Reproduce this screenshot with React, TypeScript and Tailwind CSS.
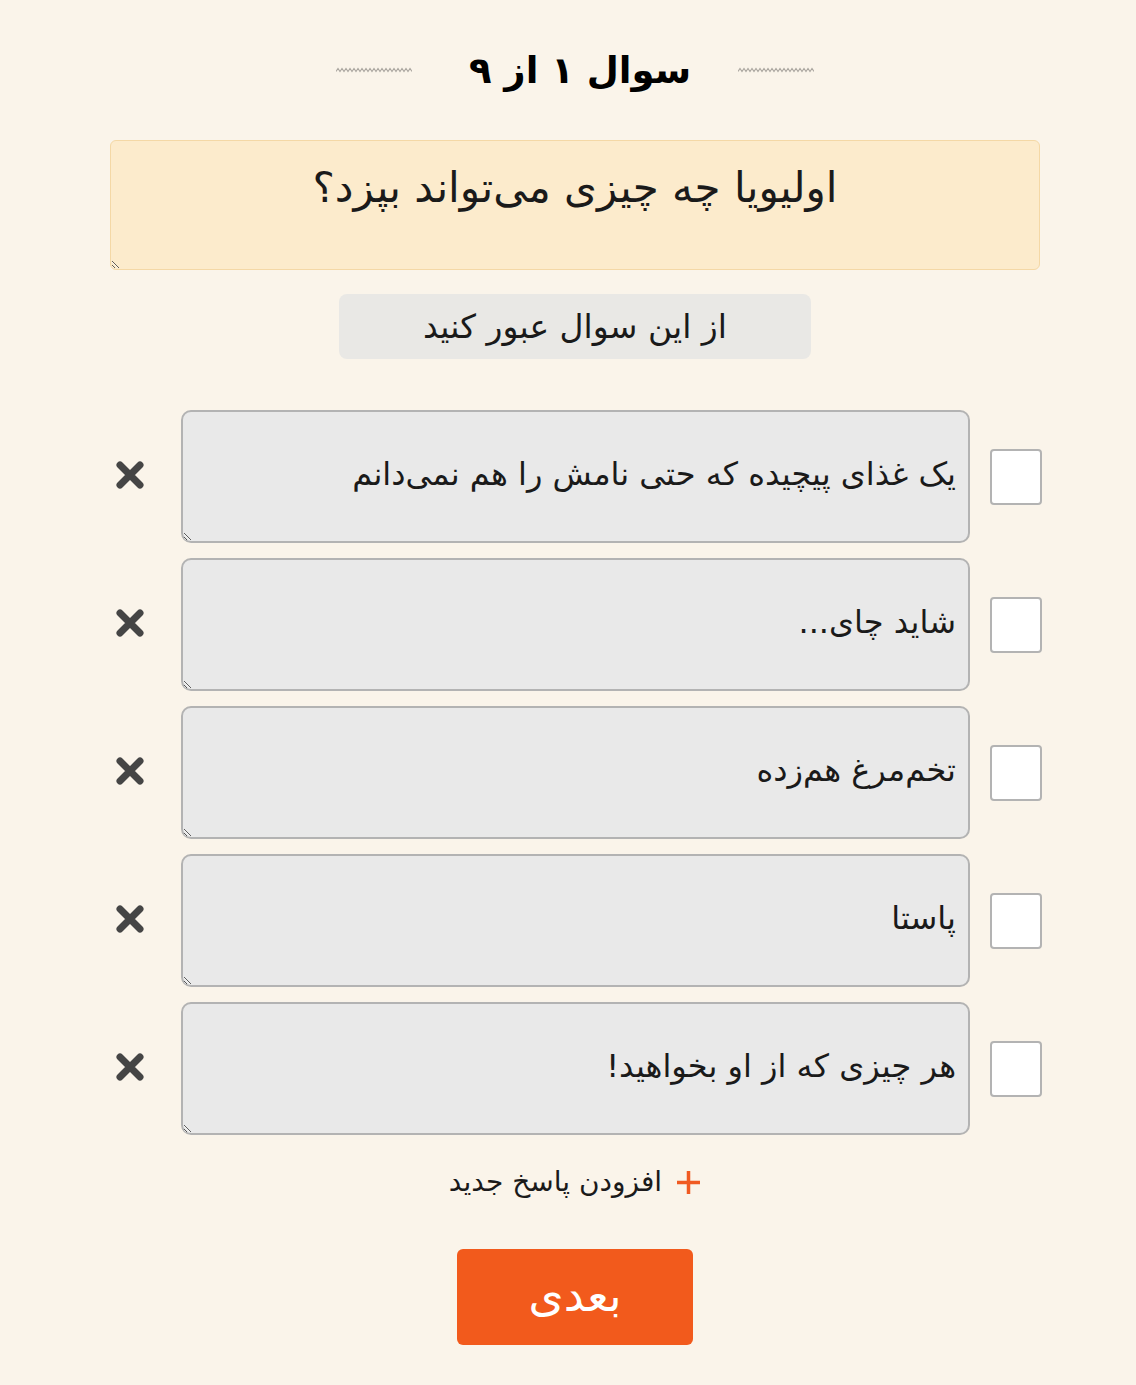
import React, { useState } from 'react';

const answersInit = [
    'یک غذای پیچیده که حتی نامش را هم نمی‌دانم',
    'شاید چای...',
    'تخم‌مرغ هم‌زده',
    'پاستا',
    'هر چیزی که از او بخواهید!',
];

const Squiggle: React.FC = () => (
    <svg width="76" height="6" viewBox="0 0 76 6" className="block">
        <polyline
            points={Array.from({ length: 39 }, (_, i) => `${i * 2},${i % 2 === 0 ? 4.5 : 1.5}`).join(' ')}
            fill="none"
            stroke="#a9a59e"
            strokeWidth="1.1"
        />
    </svg>
);

const CrossIcon: React.FC = () => (
    <svg width="30" height="30" viewBox="0 0 30 30">
        <path d="M5 5 L25 25 M25 5 L5 25" stroke="#454545" strokeWidth="7" strokeLinecap="round" />
    </svg>
);

const App: React.FC = () => {
    const [answers, setAnswers] = useState(answersInit);
    const [checked, setChecked] = useState<boolean[]>(answersInit.map(() => false));

    const removeAnswer = (idx: number) => {
        setAnswers(answers.filter((_, i) => i !== idx));
        setChecked(checked.filter((_, i) => i !== idx));
    };

    return (
        <div className="min-h-[1385px] bg-[#faf4ea] font-['DejaVu_Sans',sans-serif] text-[#1a1a1a]">
            <div className="ml-[110px] w-[932px] pt-[38px]">
                {/* title */}
                <div className="flex items-center justify-center h-[64px] pr-[2px]">
                    <Squiggle />
                    <h1 dir="rtl" className="ml-[57px] mr-[47px] text-[37px] font-bold leading-none text-black">سوال ۱ از ۹</h1>
                    <Squiggle />
                </div>

                {/* question */}
                <textarea
                    dir="rtl"
                    defaultValue="اولیویا چه چیزی می‌تواند بپزد؟"
                    className="mt-[38px] block w-[930px] h-[130px] bg-[#fcebcc] border border-[#f4d8a6] rounded-[6px] text-center text-[42px] leading-[60px] pt-[17px] px-4 outline-none"
                />

                <div className="flex justify-center mt-[24px] pr-[2px]">
                    <button className="w-[472px] h-[65px] bg-[#e9e8e5] rounded-[8px] text-[33px] text-[#1a1a1a]" dir="rtl">
                        از این سوال عبور کنید
                    </button>
                </div>

                {/* answers */}
                <div className="mt-[51px] flex flex-col gap-[15px]">
                    {answers.map((a, i) => (
                        <div key={i} className="flex items-center">
                            <button
                                onClick={() => removeAnswer(i)}
                                className="w-[71px] flex justify-start pl-[5px] pb-[4px] shrink-0"
                                aria-label="حذف پاسخ"
                            >
                                <CrossIcon />
                            </button>
                            <textarea
                                dir="rtl"
                                defaultValue={a}
                                className="block w-[789px] h-[133px] shrink-0 bg-[#e9e9e9] border-2 border-[#b3b3b3] rounded-[10px] text-right text-[32px] leading-[48px] pt-[38px] pr-[12px] pl-3 outline-none"
                            />
                            <button
                                onClick={() => setChecked(checked.map((c, j) => (j === i ? !c : c)))}
                                className="ml-[20px] w-[52px] h-[56px] shrink-0 bg-white border-2 border-[#b3b3b3] rounded-[4px] flex items-center justify-center text-[30px] text-[#f25a1c]"
                            >
                                {checked[i] ? '✔' : ''}
                            </button>
                        </div>
                    ))}
                </div>

                {/* add answer */}
                <div className="flex justify-center mt-[26px] pr-[2px]">
                    <button
                        dir="rtl"
                        onClick={() => {
                            setAnswers([...answers, '']);
                            setChecked([...checked, false]);
                        }}
                        className="flex items-center gap-[14px] text-[28px] text-[#1a1a1a]"
                    >
                        <svg width="25" height="25" viewBox="0 0 25 25">
                            <path d="M12.5 1 V24 M1 12.5 H24" stroke="#f05a22" strokeWidth="3.5" />
                        </svg>
                        <span>افزودن پاسخ جدید</span>
                    </button>
                </div>

                <div className="flex justify-center mt-[46px] pr-[2px]">
                    <button className="w-[236px] h-[96px] bg-[#f25a1c] rounded-[6px] text-white text-[45px] leading-none pb-[4px]">بعدی</button>
                </div>
            </div>
        </div>
    );
};

export default App;
